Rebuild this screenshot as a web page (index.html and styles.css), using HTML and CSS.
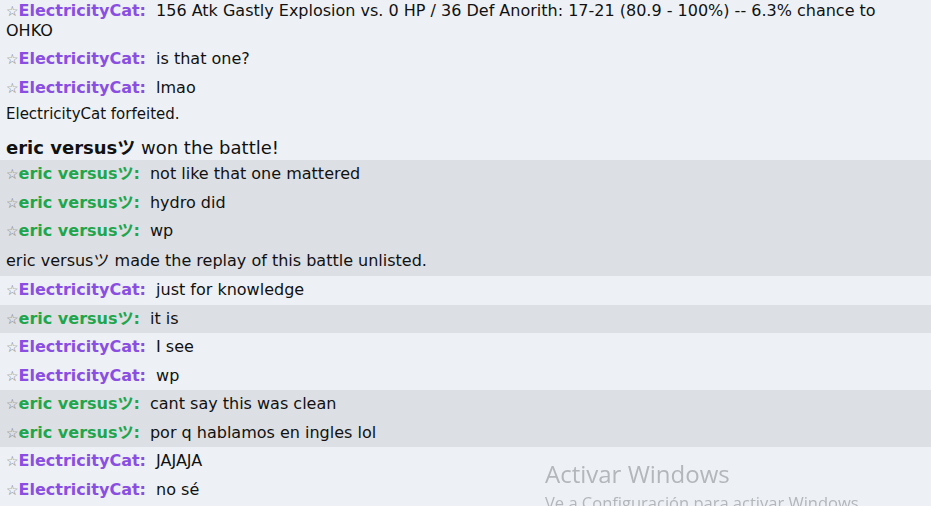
FILE: index.html
```
<!DOCTYPE html>
<html lang="es">
<head>
  <meta charset="UTF-8">
  <title>Battle chat</title>
  <link rel="stylesheet" href="styles.css">
</head>
<body>
  <div class="log">
    <div class="chat first"><span class="star">☆</span><strong class="user cat">ElectricityCat:</strong> 156 Atk Gastly Explosion vs. 0 HP / 36 Def Anorith: 17-21 (80.9 - 100%) -- 6.3% chance to OHKO</div>
    <div class="chat"><span class="star">☆</span><strong class="user cat">ElectricityCat:</strong> is that one?</div>
    <div class="chat"><span class="star">☆</span><strong class="user cat">ElectricityCat:</strong> lmao</div>
    <div class="notice small">ElectricityCat forfeited.</div>
    <div class="winner"><strong>eric versusツ</strong> won the battle!</div>

    <div class="chat alt"><span class="star">☆</span><strong class="user eric">eric versusツ:</strong> not like that one mattered</div>
    <div class="chat alt"><span class="star">☆</span><strong class="user eric">eric versusツ:</strong> hydro did</div>
    <div class="chat alt"><span class="star">☆</span><strong class="user eric">eric versusツ:</strong> wp</div>
    <div class="chat alt notice">eric versusツ made the replay of this battle unlisted.</div>

    <div class="chat"><span class="star">☆</span><strong class="user cat">ElectricityCat:</strong> just for knowledge</div>
    <div class="chat alt"><span class="star">☆</span><strong class="user eric">eric versusツ:</strong> it is</div>
    <div class="chat"><span class="star">☆</span><strong class="user cat">ElectricityCat:</strong> I see</div>
    <div class="chat"><span class="star">☆</span><strong class="user cat">ElectricityCat:</strong> wp</div>
    <div class="chat alt"><span class="star">☆</span><strong class="user eric">eric versusツ:</strong> cant say this was clean</div>
    <div class="chat alt"><span class="star">☆</span><strong class="user eric">eric versusツ:</strong> por q hablamos en ingles lol</div>
    <div class="chat"><span class="star">☆</span><strong class="user cat">ElectricityCat:</strong> JAJAJA</div>
    <div class="chat"><span class="star">☆</span><strong class="user cat">ElectricityCat:</strong> no sé</div>
  </div>

  <div class="watermark">
    <div class="wm-title">Activar Windows</div>
    <div class="wm-sub">Ve a Configuración para activar Windows.</div>
  </div>
</body>
</html>
```

FILE: styles.css
```
html, body {
  height: 100%;
}

body {
  font-family: 'DejaVu Sans', Verdana, 'Noto Sans CJK JP', sans-serif;
  background-color: #edf1f5;
  color: #111;
  margin: 0;
  padding: 0;
  overflow: hidden;
}

.log {
  margin-top: -3px;
}

.chat {
  font-size: 16px;
  line-height: 20.25px;
  padding: 4px 6px 4.25px;
}

.chat.first {
  line-height: 20px;
}

.chat.alt {
  background-color: #dcdfe3;
}

.chat.notice {
  padding-top: 5px;
  padding-bottom: 5.25px;
}

.star {
  color: #7d7d7d;
  font-size: 14px;
}

.user {
  margin-right: 5px;
}

.user.cat {
  color: #8a4ee2;
}

.user.eric {
  color: #1fa64d;
}

.notice.small {
  font-size: 15px;
  line-height: 18px;
  padding: 3px 6px;
}

.winner {
  font-size: 18px;
  line-height: 22px;
  padding: 0 6px 1px;
  margin-top: 11px;
}

.watermark {
  position: fixed;
  left: 545px;
  top: 455px;
  color: #b3b6ba;
  font-family: 'Open Sans', 'Noto Sans', sans-serif;
  white-space: nowrap;
}

.wm-title {
  font-size: 24px;
  line-height: 37px;
}

.wm-sub {
  font-size: 16.5px;
  line-height: 22px;
}
```
